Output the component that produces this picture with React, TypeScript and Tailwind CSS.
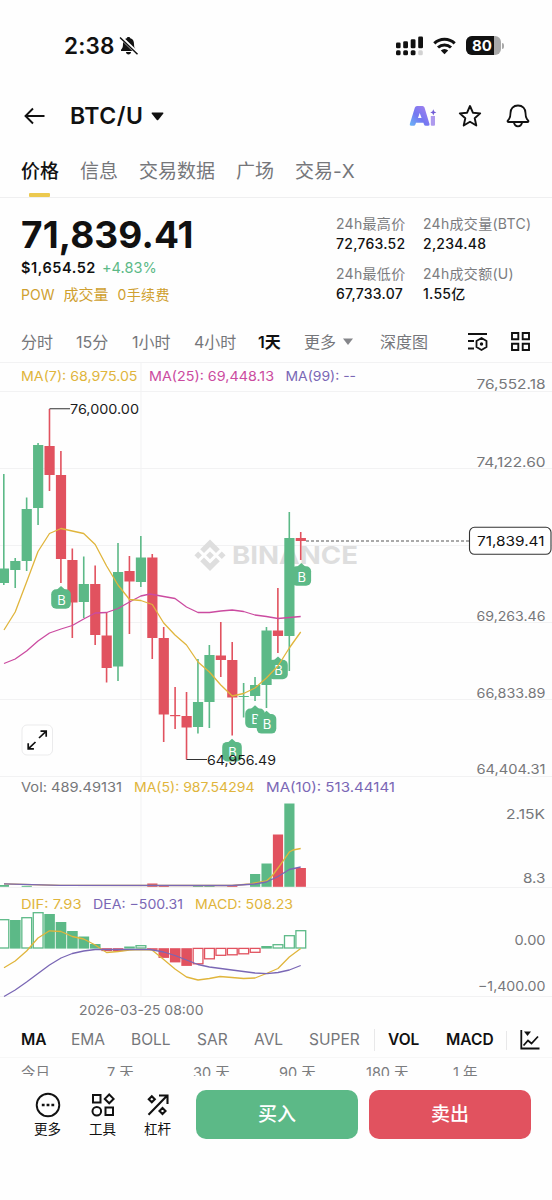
import type { ReactNode } from 'react';

type Side = 'up' | 'down';

interface Candle {
  side: Side;
  high: number;
  top: number;
  bottom: number;
  low: number;
}

interface MacdBar {
  side: Side;
  end: number;
  hollow: boolean;
}

const GREEN = '#5cb987';
const RED = '#e1525f';
const GOLD = '#e0b53c';
const PINK = '#cb4ba0';
const PURPLE = '#7a67b5';

const STEP = 11.42;
const centerOf = (i: number) => 3.8 + i * STEP;

const c = (side: Side, high: number, top: number, bottom: number, low: number): Candle => ({ side, high, top, bottom, low });

const candles: Candle[] = [
  c('up', 474, 568.5, 583, 585),
  c('up', 558, 561, 570, 588),
  c('up', 497.5, 509, 561, 571),
  c('up', 443, 445, 508, 525),
  c('down', 409, 446, 475, 491),
  c('down', 451, 475, 559, 583),
  c('down', 548.5, 560, 602.5, 638),
  c('up', 556.5, 584, 602, 618),
  c('down', 565.5, 584, 635, 645),
  c('down', 612, 635.5, 668, 682.5),
  c('up', 543, 572, 666.5, 681),
  c('down', 556, 571, 581.5, 634),
  c('up', 536, 557.5, 582, 587),
  c('down', 554, 557.5, 638, 659),
  c('down', 627, 638, 714.5, 742),
  c('down', 687, 715, 716.2, 729),
  c('down', 692, 716, 727.5, 759.5),
  c('up', 659, 702, 727, 733.5),
  c('up', 645, 655, 702, 728),
  c('down', 622, 655.5, 660, 677),
  c('down', 642, 660, 697.5, 735.5),
  c('up', 683, 696, 697, 717.5),
  c('up', 677, 685, 696, 701),
  c('up', 627, 630.5, 685, 708),
  c('down', 588, 630.5, 636, 653),
  c('up', 512, 538, 636, 671),
  c('down', 532, 538, 541, 560),
];

const m = (side: Side, end: number, hollow = false): MacdBar => ({ side, end, hollow });

const macdBars: MacdBar[] = [
  m('up', 919.5, true), m('up', 920), m('up', 917.5, true), m('up', 912.5, true), m('up', 914),
  m('up', 922), m('up', 931), m('up', 936.5), m('up', 944), m('down', 950.7),
  m('down', 950.7), m('up', 946.5), m('up', 945.5, true), m('down', 949.5), m('down', 957.5),
  m('down', 962), m('down', 965.5), m('down', 964, true), m('down', 959, true), m('down', 955.5, true),
  m('down', 955, true), m('down', 954, true), m('down', 952.5, true), m('up', 946), m('up', 944.5, true),
  m('up', 935.5, true), m('up', 930.5, true),
];

const volumes = [
  { i: 0, y: 885 }, { i: 2, y: 885.8 }, { i: 13, y: 883.5 }, { i: 14, y: 885.2 }, { i: 17, y: 885.7 },
  { i: 18, y: 885.7 }, { i: 20, y: 885.7 }, { i: 22, y: 874 }, { i: 23, y: 863.5 }, { i: 24, y: 834.5 },
  { i: 25, y: 803.5 }, { i: 26, y: 868 },
];

const ma7 = '4,630 15.2,612 26.6,582 38,551.5 49.5,533.5 61,528.5 72.3,531 83.7,533.5 95.2,544.5 106.6,566 118,585 129.5,599.5 140.8,600.5 152.3,604.5 163.7,623 175,635 186.5,645 198,662 209.4,672 220.8,685 232.2,696 243.6,693.5 255,688 266.4,678 278,666 289.3,648 300.7,632';
const ma25 = '4,663.5 15.2,659 26.6,651 38,641 49.5,633 61,629 72.3,625.5 83.7,619 95.2,613 106.6,612.5 118,608.5 129.5,602 140.8,596 150,594 163.7,596.5 175,598.5 186.5,607 198,612.5 209.4,612.5 220.8,611 232.2,610 243.6,611.5 255,615 266.4,616.5 278,618.5 289.3,617.5 300.7,616.5';
const volMa5 = '4,883.8 60,885.3 232,885.5 250,884 255,882.8 266.4,881 272,876 278,868 289.3,852 293,850 300.7,848.5';
const volMa10 = '4,883.8 60,885.3 232,885.5 255,884 266.4,882 278,876.5 289.3,869.5 300.7,867';
const dif = '4,967.8 15.2,961 26.6,951 38,938 49.5,930.8 61,931.5 72.3,936.5 83.7,939 95.2,945 106.6,952.5 118,951.5 129.5,950 141,949.5 152,950 163.7,959.5 175,969 186.5,977 198,980 209.4,978.5 220,976.5 232,977.5 243.6,978.5 255,978 266.4,973.5 278,968.5 289.3,957 300.7,948.5';
const dea = '4,996.5 15.2,990 26.6,982 38,973.5 49.5,965 61,958 72.3,953.5 83.7,951 95.2,949.5 150,949.5 163.7,952 175,955.5 186.5,960 198,964.5 209.4,967 232,970 255,973 267,973.7 278,972.5 289.3,970 300.7,965.5';

const buyMarks = [
  { x: 61, y: 599 },
  { x: 301.3, y: 576 },
  { x: 278, y: 669.5 },
  { x: 255, y: 718.3 },
  { x: 266.5, y: 723.8 },
  { x: 232, y: 751.7 },
];

const priceAxis = [
  { y: 388.5, label: '76,552.18' },
  { y: 466.5, label: '74,122.60' },
  { y: 620.5, label: '69,263.46' },
  { y: 697.5, label: '66,833.89' },
  { y: 773.5, label: '64,404.31' },
];

function Label({ x, y, w, fill = '#76777a', size = 13.5, weight = 400, children }: {
  x: number; y: number; w: number; fill?: string; size?: number; weight?: number; children: string;
}) {
  return (
    <text x={x} y={y} textLength={w} lengthAdjust="spacingAndGlyphs" fill={fill} fontSize={size} fontWeight={weight}>
      {children}
    </text>
  );
}

function Chart() {
  return (
    <svg width="552" height="660" viewBox="0 361 552 660" className="block shrink-0">
      {/* grid */}
      <g stroke="#f2f2f3" strokeWidth="1">
        {[362.5, 391.5, 468.5, 545.5, 622.5, 699.5, 776.5, 887.5, 996.5].map((y) => (
          <line key={y} x1="0" x2="552" y1={y} y2={y} />
        ))}
        <line x1="141" x2="141" y1="362" y2="997" />
      </g>

      {/* watermark */}
      <g fill="#dedede">
        <path d="M210 539.5l9.8 9.8-3.8 3.8-6-6-6 6-3.8-3.8zM210 571l9.8-9.8-3.8-3.8-6 6-6-6-3.8 3.8zM210 551.4l3.9 3.9-3.9 3.9-3.9-3.9zM198.2 551.4l3.8 3.8-3.8 3.8-3.8-3.8zM221.8 551.4l3.8 3.8-3.8 3.8-3.8-3.8z" />
        <text x="232" y="563.7" textLength="126" lengthAdjust="spacingAndGlyphs" fontSize="24" fontWeight="700">BINANCE</text>
      </g>

      {candles.map((k, i) => {
        const x = centerOf(i);
        const color = k.side === 'up' ? GREEN : RED;
        return (
          <g key={i} fill={color}>
            <rect x={x - 0.8} y={k.high} width="1.6" height={k.low - k.high} />
            <rect x={x - 5} y={k.top} width="10.2" height={k.bottom - k.top} />
          </g>
        );
      })}

      <path d="M49.5 408.7H70M186.5 759.5H207" stroke="#333" strokeWidth="1.1" />
      <path d="M306 541H469" stroke="#555" strokeWidth="1.2" strokeDasharray="3 2" />

      {buyMarks.map((b) => (
        <g key={b.x}>
          <path d={`M${b.x - 4.5} ${b.y - 9}l4.5-4 4.5 4z`} fill={GREEN} />
          <rect x={b.x - 9.8} y={b.y - 9.8} width="19.6" height="19.6" rx="5" fill={GREEN} />
          <text x={b.x + 0.4} y={b.y + 5.6} textAnchor="middle" fontSize="13" fill="#fff">B</text>
        </g>
      ))}

      <g fill="none" strokeWidth="1.3" strokeLinejoin="round">
        <polyline points={ma25} stroke={PINK} />
        <polyline points={ma7} stroke={GOLD} />
      </g>

      <Label x={70} y={414} w={69} fill="#1b1b1c">76,000.00</Label>
      <Label x={207} y={765} w={69} fill="#1b1b1c">64,956.49</Label>

      {/* fullscreen toggle */}
      <rect x="22" y="725" width="30.5" height="30" rx="5" fill="#fff" stroke="#ebebec" />
      <path d="M39 738l7-6.7M40.5 731.2h5.7v5.6M35.5 742l-7 6.7M28.2 743.2v5.6h5.7" fill="none" stroke="#111" strokeWidth="1.7" />

      {/* volume */}
      {volumes.map((v) => (
        <rect key={v.i} x={centerOf(v.i) - 5} y={v.y} width="10.2" height={886.8 - v.y} fill={candles[v.i].side === 'up' ? GREEN : RED} />
      ))}
      <g fill="none" strokeWidth="1.3" strokeLinejoin="round">
        <polyline points={volMa5} stroke={GOLD} />
        <polyline points={volMa10} stroke={PURPLE} />
      </g>

      {/* macd */}
      {macdBars.map((b, i) => {
        const color = b.side === 'up' ? GREEN : RED;
        const y = Math.min(948.2, b.end);
        const h = Math.abs(b.end - 948.2);
        const x = centerOf(i);
        return b.hollow ? (
          <rect key={i} x={x - 4.8} y={y + 0.2} width="9.8" height={Math.max(h - 0.4, 1)} fill="#fff" stroke={color} strokeWidth="1.3" />
        ) : (
          <rect key={i} x={x - 5.2} y={y} width="10.6" height={h + 0.4} fill={color} />
        );
      })}
      <g fill="none" strokeWidth="1.3" strokeLinejoin="round">
        <polyline points={dif} stroke={GOLD} />
        <polyline points={dea} stroke={PURPLE} />
      </g>

      {/* legends */}
      <Label x={21} y={380.5} w={116.5} fill={GOLD}>MA(7): 68,975.05</Label>
      <Label x={149} y={380.5} w={125} fill={PINK}>MA(25): 69,448.13</Label>
      <Label x={285.5} y={380.5} w={70.5} fill={PURPLE}>MA(99): --</Label>
      <Label x={21} y={792} w={101}>Vol: 489.49131</Label>
      <Label x={134} y={792} w={120.5} fill={GOLD}>MA(5): 987.54294</Label>
      <Label x={266} y={792} w={129} fill={PURPLE}>MA(10): 513.44141</Label>
      <Label x={21} y={908.8} w={60.5} fill={GOLD}>DIF: 7.93</Label>
      <Label x={93} y={908.8} w={90} fill={PURPLE}>DEA: −500.31</Label>
      <Label x={195} y={908.8} w={98} fill={GOLD}>MACD: 508.23</Label>
      <Label x={79} y={1014.5} w={124.5}>2026-03-25 08:00</Label>

      {/* axis */}
      {priceAxis.map((p) => (
        <Label key={p.label} x={476.5} y={p.y} w={69}>{p.label}</Label>
      ))}
      <Label x={506} y={819} w={39}>2.15K</Label>
      <Label x={523} y={883} w={22.5}>8.3</Label>
      <Label x={514.5} y={944.5} w={31}>0.00</Label>
      <Label x={478} y={991} w={67.5}>−1,400.00</Label>
      <rect x="469.5" y="527.3" width="81.5" height="27" rx="5" fill="#fff" stroke="#333" strokeWidth="1.1" />
      <Label x={477} y={546.3} w={67.5} fill="#111">71,839.41</Label>
    </svg>
  );
}

function StatusBar() {
  return (
    <div className="flex h-[91px] shrink-0 items-center justify-between pl-[64px] pr-[48px]">
      <div className="flex items-center">
        <span className="w-[55px] whitespace-nowrap text-[22.5px] font-semibold leading-6 tracking-[0.2px]">2:38</span>
        <svg width="20" height="20" viewBox="0 0 20 20">
          <path d="M9.5 1c.9 0 1.600.5 1.800 1.300 2.700.8 3.700 2.900 3.700 5.700 0 3.500.8 4.500 2 5.700v1.300H2v-1.300c1.200-1.200 2-2.200 2-5.700 0-2.800 1-4.900 3.700-5.700C7.900 1.500 8.600 1 9.500 1zM7 16h5c0 1.500-1.100 2.500-2.500 2.500S7 17.500 7 16z" fill="#111" />
          <path d="M1.800 1.200l17 16.500" stroke="#fff" strokeWidth="3.600" />
          <path d="M1 1.500l17.500 16.800" stroke="#111" strokeWidth="1.500" />
        </svg>
      </div>
      <div className="flex items-center">
        <svg width="28" height="20" viewBox="0 0 28 20" fill="#111">
          <rect x="0" y="6.500" width="4.600" height="5.800" rx="1.300" />
          <rect x="7.200" y="5.300" width="4.800" height="7" rx="1.300" />
          <rect x="14.700" y="3.300" width="4.800" height="9" rx="1.300" />
          <rect x="22.200" y="0.500" width="4.800" height="11.800" rx="1.300" />
          <rect x="0" y="14.200" width="4.600" height="5" rx="1.500" />
          <rect x="7.200" y="14.200" width="4.800" height="5" rx="1.500" />
          <rect x="14.700" y="14.200" width="4.800" height="5" rx="1.500" />
          <rect x="22.200" y="14.200" width="4.600" height="5" rx="1.500" fill="#d2d2d2" />
        </svg>
        <svg width="23" height="18" viewBox="0 0 23 18" className="ml-[9px]">
          <path d="M1.300 6.400a14.600 14.600 0 0 1 20.400 0M5 10.500a9.400 9.400 0 0 1 13 0" fill="none" stroke="#111" strokeWidth="3" />
          <path d="M11.500 17.300l-3.700-3.700a5.300 5.300 0 0 1 7.400 0z" fill="#111" />
        </svg>
        <div className="ml-[10px] flex h-[19px] w-[35px] items-center overflow-hidden rounded-[6px] bg-[#a9a9a9]">
          <div className="flex h-full w-[28px] items-center bg-[#111] pl-[6px] text-[15px] font-bold leading-none text-white">80</div>
        </div>
        <div className="ml-[1px] h-[6px] w-[2px] rounded-r-full bg-[#a9a9a9]" />
      </div>
    </div>
  );
}

function Header() {
  return (
    <div className="flex h-[50px] shrink-0 items-center justify-between pl-[24px] pr-[22px]">
      <div className="flex items-center">
        <svg width="21" height="18" viewBox="0 0 21 18" fill="none" stroke="#111" strokeWidth="1.900">
          <path d="M20.500 9H1.800M9 1.500L1.500 9 9 16.500" />
        </svg>
        <span className="ml-[25px] w-[81px] whitespace-nowrap text-[23px] font-semibold leading-7 tracking-[0.500px]">BTC/U</span>
        <svg width="13" height="9" viewBox="0 0 13 9"><path d="M1 .5h11q.8.4.2 1.200L7.200 8q-.7.700-1.400 0L.8 1.700Q.2.900 1 .5z" fill="#111" /></svg>
      </div>
      <div className="flex items-center">
        <svg width="28" height="22" viewBox="0 0 28 22" className="mr-px">
          <defs>
            <linearGradient id="aiFill" x1="0" y1="1" x2="1" y2="0">
              <stop offset="0" stopColor="#69b7f7" />
              <stop offset="0.450" stopColor="#7477f1" />
              <stop offset="1" stopColor="#a982ee" />
            </linearGradient>
          </defs>
          <path d="M8 1h5.500q1.500 0 2 1.500l5 16.500q.4 1.800-1.200 1.800h-2.600q-1.300 0-1.700-1.300l-.6-1.700H7l-.6 1.700q-.4 1.300-1.700 1.300H2q-1.700 0-1.200-1.800L5.900 2.500Q6.400 1 8 1zM10.700 8L9 13h3.600z" fill="url(#aiFill)" fillRule="evenodd" />
          <path d="M21.800 11h4.200v8.800q0 1-1 1h-2.200q-1 0-1-1z" fill="#ae9aee" />
          <path d="M24.300 4.300l.9 2.200 2.200.9-2.200.9-.9 2.200-.9-2.200-2.200-.9 2.200-.9z" fill="#715cd6" />
        </svg>
        <svg width="24" height="24" viewBox="0 0 24 24" fill="none" stroke="#111" strokeWidth="1.900" strokeLinejoin="round" className="ml-[20px]">
          <path d="M12 2l2.900 6.700 7.300.7-5.500 4.900 1.600 7.200L12 17.700l-6.300 3.800 1.600-7.200L1.800 9.400l7.300-.7z" />
        </svg>
        <svg width="24" height="24" viewBox="0 0 24 24" fill="none" stroke="#111" strokeWidth="1.800" strokeLinejoin="round" className="ml-[24px]">
          <path d="M12 1.500c-4.700 0-7.500 3.400-7.500 7.500 0 3-.3 4.700-1.500 6.200-.7.800-1.500 1.300-1.500 2 0 .6.500.8 1 .8h19c.5 0 1-.2 1-.8 0-.7-.8-1.200-1.500-2-1.200-1.500-1.500-3.200-1.500-6.200 0-4.100-2.800-7.500-7.500-7.500zM7.800 18c.5 2.700 2 4.300 4.200 4.300s3.700-1.600 4.200-4.300" />
        </svg>
      </div>
    </div>
  );
}

function Stat({ label, value }: { label: string; value: string }) {
  return (
    <div className="flex h-[50px] flex-col whitespace-nowrap">
      <span className="text-[14px] leading-5 tracking-[0.300px] text-[#7b7c7e]">{label}</span>
      <span className="text-[14px] font-medium leading-5 tracking-[0.250px]">{value}</span>
    </div>
  );
}

function BottomAction({ label, children }: { label: string; children: ReactNode }) {
  return (
    <button className="flex w-[55px] flex-col items-center">
      <span className="flex h-[26px] items-center">{children}</span>
      <span className="mt-[1px] text-[13.500px] leading-5">{label}</span>
    </button>
  );
}

export default function App() {
  return (
    <div className="flex h-[1200px] w-[552px] flex-col overflow-hidden bg-[#fefefe] font-[Inter,'Noto_Sans_CJK_SC',sans-serif] text-[#111]">
      <StatusBar />
      <Header />

      <nav className="flex h-[57px] shrink-0 border-b border-[#efeff0] pl-[21px] pt-[16px] text-[19px] leading-[30px] text-[#75767a]">
        <div className="flex w-[59px] flex-col font-medium text-[#111]">
          价格
          <span className="ml-[8px] mt-[6px] h-[4px] w-[21px] shrink-0 rounded-[1px] bg-[#ecc94f]" />
        </div>
        <span className="w-[59px]">信息</span>
        <span className="w-[97px]">交易数据</span>
        <span className="w-[59px]">广场</span>
        <span className="whitespace-nowrap">交易-X</span>
      </nav>

      <section className="flex h-[123px] shrink-0 pl-[21px] pt-[16px]">
        <div className="flex w-[315px] flex-col whitespace-nowrap">
          <span className="text-[37px] font-bold leading-[42px] tracking-[0.120px]">71,839.41</span>
          <div className="mt-[2px] flex gap-[6px] text-[14.500px] leading-5">
            <span className="font-semibold tracking-[0.550px]">$1,654.52</span>
            <span className="tracking-[0.050px] text-[#5cb987]">+4.83%</span>
          </div>
          <div className="mt-[7px] flex gap-[9px] text-[14px] leading-5 text-[#cfa02f]">
            <span>POW</span>
            <span className="text-[15px]">成交量</span>
            <span className="tracking-[0.400px]">0手续费</span>
          </div>
        </div>
        <div className="flex w-[87px] flex-col">
          <Stat label="24h最高价" value="72,763.52" />
          <Stat label="24h最低价" value="67,733.07" />
        </div>
        <div className="flex flex-col">
          <Stat label="24h成交量(BTC)" value="2,234.48" />
          <Stat label="24h成交额(U)" value="1.55亿" />
        </div>
      </section>

      <div className="flex h-[40px] shrink-0 items-center whitespace-nowrap pl-[21px] pt-px text-[16px] leading-6 text-[#75767a]">
        <span className="w-[55px]">分时</span>
        <span className="w-[56px]">15分</span>
        <span className="w-[62px]">1小时</span>
        <span className="w-[64px]">4小时</span>
        <span className="w-[46px] font-semibold text-[#111]">1天</span>
        <span className="w-[38px]">更多</span>
        <svg width="12" height="8" viewBox="0 0 12 8" className="mr-[26px]"><path d="M1 .5h10L6 7z" fill="#85868a" /></svg>
        <span className="w-[88px]">深度图</span>
        <svg width="20" height="20" viewBox="0 0 20 20" fill="none" stroke="#111" strokeWidth="1.800">
          <path d="M0 2h19M0 9h6M0 16.500h6M13.500 6l5 3v6l-5 3-5-3V9z" />
          <circle cx="13.500" cy="12" r="1.700" fill="#111" stroke="none" />
        </svg>
        <svg width="19" height="19" viewBox="0 0 19 19" fill="none" stroke="#111" strokeWidth="1.900" className="ml-[23px]">
          <path d="M1 1h6.300v6.300H1zM11.700 1H18v6.300h-6.300zM1 11.700h6.300V18H1zM11.700 11.700H18V18h-6.300z" />
        </svg>
      </div>

      <Chart />

      <div className="flex h-[37px] shrink-0 items-center whitespace-nowrap border-b border-[#f7f7f7] pl-[21px] pt-[2px] text-[15.500px] text-[#75767a]">
        <span className="w-[50px] font-semibold text-[#111]">MA</span>
        <span className="w-[60px]">EMA</span>
        <span className="w-[66px]">BOLL</span>
        <span className="w-[57px]">SAR</span>
        <span className="w-[55px]">AVL</span>
        <span className="w-[65px]">SUPER</span>
        <span className="mr-[13px] h-[22px] w-px bg-[#e8e8e9]" />
        <span className="w-[58px] font-semibold text-[#111]">VOL</span>
        <span className="w-[60px] font-semibold text-[#111]">MACD</span>
        <span className="mr-[13px] h-[19px] w-px bg-[#e8e8e9]" />
        <svg width="20" height="20" viewBox="0 0 20 20" fill="none" stroke="#111" strokeWidth="1.800">
          <path d="M1.300 0v18.500H19.500M3.500 15.500l4.500-5 3.500 3 6.500-7" />
          <path d="M4 1.500h7L7.500 6z" fill="#111" stroke="none" />
        </svg>
      </div>

      <div className="flex h-[18px] shrink-0 overflow-hidden whitespace-nowrap pl-[21px] pt-[4px] text-[14.500px] leading-[22px] text-[#7b7c7e]">
        <span className="w-[86px]">今日</span>
        <span className="w-[86px]">7 天</span>
        <span className="w-[86px]">30 天</span>
        <span className="w-[87px]">90 天</span>
        <span className="w-[87px]">180 天</span>
        <span>1 年</span>
      </div>

      <div className="flex grow items-start bg-[#fefefe] pl-[20px] pt-[14px]">
        <div className="flex w-[176px] pt-[2px]">
          <BottomAction label="更多">
            <svg width="26" height="26" viewBox="0 0 26 26" fill="none" stroke="#111" strokeWidth="1.900">
              <circle cx="13" cy="13" r="11.300" />
              <path d="M6.800 13h2.800M11.600 13h2.800M16.400 13h2.800" strokeWidth="2.600" />
            </svg>
          </BottomAction>
          <BottomAction label="工具">
            <svg width="24" height="24" viewBox="0 0 24 24" fill="none" stroke="#111" strokeWidth="2">
              <path d="M2 2h7.500v7.500H2zM14.500 14.500H22V22h-7.500zM18.200 1.500l4.400 4.400-4.400 4.400-4.400-4.400z" />
              <circle cx="5.800" cy="18.200" r="4.300" />
            </svg>
          </BottomAction>
          <BottomAction label="杠杆">
            <svg width="22" height="22" viewBox="0 0 22 22" fill="none" stroke="#111" strokeWidth="2.100">
              <path d="M1.500 20.800L20 1.800M12 1.500h8.500v8.500M4.800 2.300l3 3-3 3-3-3zM15.500 14l3 3-3 3-3-3z" />
            </svg>
          </BottomAction>
        </div>
        <button className="h-[49px] w-[162px] rounded-[10px] bg-[#5cb987] pt-[2px] text-[19px] font-medium text-white">买入</button>
        <button className="ml-[11px] h-[49px] w-[162px] rounded-[10px] bg-[#e1525f] pt-[2px] text-[19px] font-medium text-white">卖出</button>
      </div>
    </div>
  );
}
